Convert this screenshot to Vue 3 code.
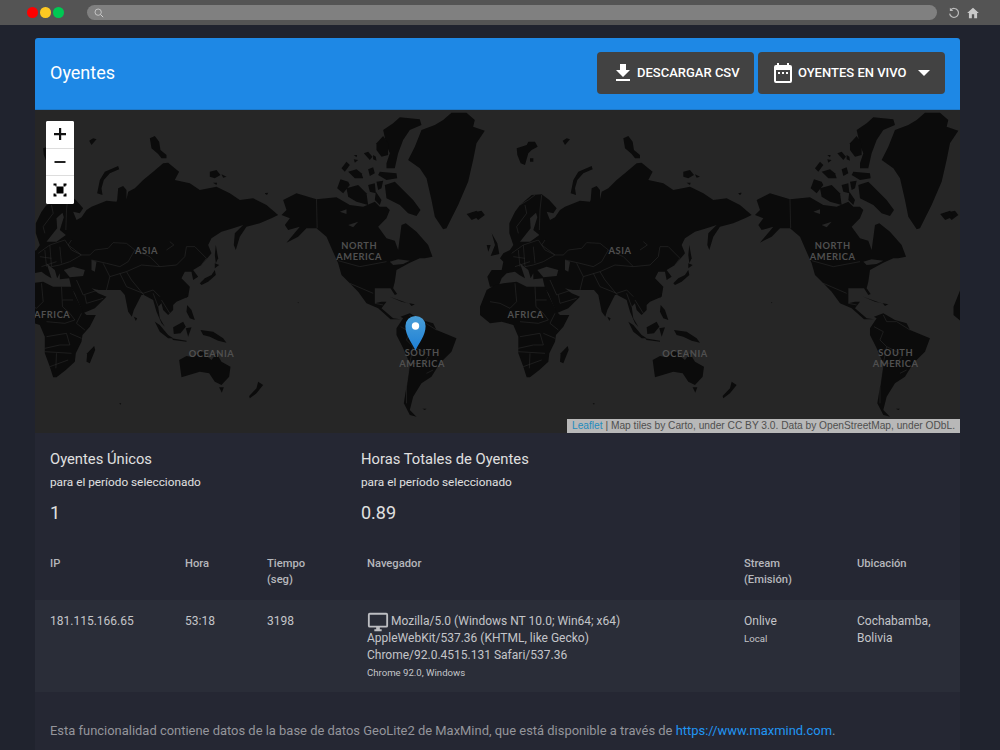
<script setup>
const tile = 473.5
const copies = [-tile, 0, tile]

// Each region is traced in a 3x crop whose top-left corner is (ox, oy) on the page.
const regions = [
  {
    ox: 500,
    oy: 130,
    land: [
      // Svalbard, Franz Josef, Novaya Zemlya and other arctic islands
      '50,55 80,45 85,35 105,35 113,50 95,60 85,70 75,105 62,100 52,75',
      '90,85 100,85 100,95 90,95',
      '188,32 200,25 210,28 195,45',
      '370,25 385,18 398,35 402,60 420,75 420,85 405,85 395,72 375,55',
      '275,108 278,118 250,130 232,150 225,175 228,195 212,190 220,150 235,125',
      '550,125 570,120 582,135 565,145 550,140',
      '585,133 600,140 590,143',
      '560,158 572,158 570,165',
      '715,190 722,188 720,195',
      // Eurasia
      '28,280 45,245 60,225 95,195 125,193 148,210 170,235 160,250 140,245 150,270 165,262 180,240 195,230 240,212 270,215 272,210 275,175 290,168 300,180 300,230 292,245 305,185 325,175 350,150 380,125 410,100 425,98 445,115 458,125 445,150 490,160 520,180 570,170 610,190 640,210 680,205 720,225 755,255 735,265 700,280 660,290 640,320 628,360 622,345 625,310 650,285 620,295 585,305 555,325 545,345 555,370 525,405 500,420 515,440 500,450 495,425 475,425 465,445 490,470 485,500 450,515 440,525 440,540 425,555 410,540 405,520 395,530 400,565 415,590 405,580 390,545 380,510 352,495 345,495 322,540 316,560 305,545 295,495 282,480 245,480 215,480 195,475 215,490 240,500 205,535 180,545 170,550 145,490 135,475 128,445 100,448 100,430 92,445 85,420 60,400 75,445 58,435 45,425 20,430 5,445 -5,470 -30,470 -38,440 -25,420 5,420 10,395 0,385 10,370 30,360 40,345 28,310',
      // Kamchatka tail and Sakhalin
      '568,345 575,385 568,400 565,375',
      '565,400 578,405 565,415',
      // British Isles and Iceland
      '-25,310 -8,340 -2,372 -28,378 -15,345',
      '-40,345 -28,345 -35,365',
      '-100,252 -70,242 -62,260 -85,270'
    ],
    seas: [
      '60,335 80,310 92,295 90,265 108,248 112,262 100,300 118,315 90,335',
      '112,420 140,410 175,420 170,438 130,442',
      '195,390 210,395 205,425 195,420'
    ],
    borders: [
      '35,370 70,345 115,330 135,360 165,375',
      '70,345 75,410 100,405 130,395 165,375',
      '40,380 75,385',
      '100,350 105,400',
      '55,360 60,410',
      '45,410 90,395',
      '135,330 125,345 165,375 190,375',
      '60,225 85,210 105,195',
      '55,310 50,290 80,250 75,225',
      '125,195 120,240 118,300',
      '190,375 205,360 245,355 260,338 300,340 325,360 370,380 400,410 450,405 475,380 480,350 505,350 540,385 525,405',
      '325,360 305,395 280,410 240,400 195,390',
      '230,400 250,440 300,425 315,450 352,495',
      '250,440 240,480',
      '300,425 345,405 400,410',
      '400,500 380,480 350,490',
      '430,335 442,345 420,360'
    ]
  },
  {
    ox: 500,
    oy: 270,
    land: [
      // Africa
      '-60,110 -40,60 -15,45 10,40 50,35 80,50 135,50 145,75 170,125 180,135 208,135 190,170 168,195 165,215 148,250 145,275 118,300 90,322 80,322 70,290 55,250 55,200 40,165 5,155 -30,160 -60,135',
      '203,228 206,240 190,280 180,275 182,250',
      // Australasia
      '458,270 480,258 500,262 525,240 545,262 555,270 570,250 585,275 612,290 608,320 585,345 565,335 548,310 520,305 465,322 462,300',
      '578,352 592,352 586,368',
      '695,335 710,345 690,370 670,385 668,378 690,355',
      '522,180 560,185 590,205 600,218 575,212 550,200 530,195',
      // South East Asia
      '440,172 470,155 478,170 462,190 442,192',
      '385,155 400,165 425,195 440,205 425,205 400,185',
      '435,205 480,212 480,215 440,210',
      '478,175 495,172 485,200',
      '482,105 495,120 505,150 490,145 480,125',
      '322,140 332,145 328,153',
      '478,75 485,72 480,85',
      '520,40 535,25 555,15 565,0 568,15 545,35 525,45',
      '278,400 284,400 282,404'
    ],
    seas: [],
    borders: [
      '45,40 50,95',
      '105,50 108,110',
      '140,90 108,90',
      '50,95 30,115 0,100 -30,95',
      '108,110 130,130 145,150 115,160 60,155',
      '60,200 120,190 130,225 100,225 55,235',
      '165,130 150,160 175,180',
      '130,190 165,205',
      '90,250 88,295',
      '55,245 135,250',
      '70,290 125,270',
      '150,30 170,75 215,60',
      '175,75 180,100 230,85',
      '280,10 300,50 350,70',
      '380,70 395,110',
      '405,90 430,130'
    ]
  },
  {
    ox: 720,
    oy: 110,
    land: [
      // Greenland and the Canadian arctic
      '590,30 615,8 660,8 685,30 680,50 715,62 690,100 680,150 665,215 635,285 600,355 590,358 565,320 555,270 540,205 520,175 485,150 505,110 525,60 565,45',
      '410,60 440,40 460,22 520,28 525,45 490,60 470,90 455,130 445,175 420,175 420,160 430,130 420,105',
      '390,100 410,78 425,100 425,135 405,140 390,120',
      '352,130 365,125 378,140 370,150',
      '322,135 332,135 330,142',
      '322,148 335,150 325,158',
      '285,175 300,155 310,165 295,185',
      '305,185 330,178 345,190 350,205 325,205',
      '365,178 380,172 385,190 370,198',
      '400,185 450,190 452,205 420,210 395,195',
      '380,135 388,140 390,152 380,148',
      '272,235 282,208 305,215 310,225 290,250',
      '300,235 335,225 360,250 365,285 330,275 305,260',
      '365,225 385,220 388,250 370,245',
      '390,215 410,212 405,235 395,240',
      '415,225 445,215 470,240 500,270 522,300 510,318 485,310 460,285 420,265',
      '388,245 405,270 400,285 385,270',
      '675,308 705,302 715,315 695,330',
      '55,250 65,248 62,254',
      // North America
      '110,270 150,250 210,268 270,262 310,285 350,290 385,275 400,290 420,290 430,300 420,325 395,350 420,385 445,392 455,420 465,345 478,340 510,365 545,405 558,440 535,445 520,445 490,458 450,480 445,515 440,535 452,552 445,555 432,535 385,535 385,580 405,575 420,575 405,595 440,625 462,628 432,628 395,595 360,580 335,545 310,520 285,495 275,460 255,415 240,380 210,355 180,355 155,380 120,398 160,350 125,360 115,345 130,325 105,315 120,300',
      // Caribbean
      '430,560 480,578 500,583 465,575',
      '488,580 505,583 495,588'
    ],
    seas: [
      '280,305 300,298 300,312',
      '305,345 335,335 320,352',
      '430,455 455,448 490,452 470,462 440,465'
    ],
    borders: [
      '210,268 212,355',
      '275,452 340,470 420,455',
      '310,520 380,550',
      '385,580 410,585'
    ]
  },
  {
    ox: 720,
    oy: 260,
    land: [
      '462,170 490,160 525,180 560,190 570,210 630,235 615,275 580,310 555,350 525,370 500,410 490,450 510,470 490,465 472,430 480,380 490,310 470,265 450,225 450,205 470,175',
      '528,446 540,446 535,450',
      '153,127 157,127 155,130'
    ],
    seas: [],
    borders: [
      '462,200 490,215 480,240 500,260 540,280',
      '490,165 500,185 530,185 570,210',
      '490,310 480,380 480,430',
      '540,340 560,330',
      '500,260 490,310 530,310 545,290'
    ]
  }
]

const labels = [
  { text: 'ASIA', x: 620, y: 254 },
  { text: 'NORTH', x: 832.7, y: 249 },
  { text: 'AMERICA', x: 832.7, y: 260 },
  { text: 'AFRICA', x: 525.7, y: 317.6 },
  { text: 'OCEANIA', x: 685, y: 357.3 },
  { text: 'SOUTH', x: 895.7, y: 355.6 },
  { text: 'AMERICA', x: 895.7, y: 366.6 }
]
const labelCopies = [-tile, 0]
</script>

<template>
  <div class="page">
    <header class="chrome">
      <div class="lights">
        <span class="light red"></span>
        <span class="light yellow"></span>
        <span class="light green"></span>
      </div>
      <div class="address">
        <svg class="search" viewBox="0 0 12 12" width="10" height="10">
          <circle cx="5" cy="5" r="3.8" fill="none" stroke="#d0d0d0" stroke-width="1" />
          <path d="M8 8l3 3" stroke="#d0d0d0" stroke-width="1.2" />
        </svg>
      </div>
      <svg class="reload" viewBox="0 0 14 14" width="12" height="12">
        <path d="M3.2 3.4A5.2 5.2 0 1 1 1.9 7.8" fill="none" stroke="#bdbdbd" stroke-width="1.4" />
        <path d="M2.2 0.8v4h4z" fill="#bdbdbd" />
      </svg>
      <svg class="home" viewBox="0 0 24 24" width="14" height="14">
        <path d="M10 21v-7h4v7h5v-9h3L12 3 2 12h3v9z" fill="#c8c8c8" />
      </svg>
    </header>

    <main class="card">
      <section class="card-head">
        <h1>Oyentes</h1>
        <div class="actions">
          <button class="btn" type="button">
            <svg viewBox="0 0 24 24" width="24" height="24">
              <path d="M19 9h-4V3H9v6H5l7 7zM5 18v2h14v-2z" fill="#fff" />
            </svg>
            <span>Descargar CSV</span>
          </button>
          <button class="btn live" type="button">
            <svg viewBox="0 0 24 24" width="24" height="24">
              <path d="M19 4h-1V2h-2v2H8V2H6v2H5a2 2 0 0 0-2 2v14a2 2 0 0 0 2 2h14a2 2 0 0 0 2-2V6a2 2 0 0 0-2-2zm0 16H5V9h14zM7 11h2v2H7zm4 0h2v2h-2zm4 0h2v2h-2z" fill="#fff" />
            </svg>
            <span>Oyentes en vivo</span>
            <i class="caret"></i>
          </button>
        </div>
      </section>

      <section class="map">
        <svg class="world" viewBox="35 110 925 323">
          <g v-for="dx in copies" :key="dx" :transform="`translate(${dx} 0)`">
            <g v-for="r in regions" :key="r.ox + '-' + r.oy" :transform="`translate(${r.ox} ${r.oy}) scale(0.3333)`">
              <polygon v-for="(p, i) in r.land" :key="'l' + i" :points="p" class="land" />
              <polygon v-for="(p, i) in r.seas" :key="'s' + i" :points="p" class="sea" />
              <polyline v-for="(b, i) in r.borders" :key="'b' + i" :points="b" class="border" />
            </g>
          </g>
          <g v-for="dx in labelCopies" :key="'t' + dx" :transform="`translate(${dx} 0)`">
            <text v-for="l in labels" :key="l.text + l.x" :x="l.x" :y="l.y" class="label">{{ l.text }}</text>
          </g>
        </svg>

        <div class="zoom">
          <button type="button">
            <svg viewBox="0 0 14 14" width="14" height="14"><path d="M6 1h2.2v5H13v2.2H8.2V13H6V8.2H1V6h5z" fill="#111" /></svg>
          </button>
          <button type="button">
            <svg viewBox="0 0 14 14" width="14" height="14"><path d="M1.5 6h11v2h-11z" fill="#222" /></svg>
          </button>
          <button type="button">
            <svg viewBox="0 0 14 14" width="14" height="14">
              <path d="M3.5 3.5h7v7h-7z" fill="#000" />
              <path d="M0.5 0.5h3v3h-1v-1h-2zM10.5 0.5h3v2h-1v1h-2zM0.5 10.5h2v1h1v2h-3zM11.5 10.5h2v3h-3v-2h1z" fill="#000" />
            </svg>
          </button>
        </div>

        <svg class="pin" viewBox="0 0 25 41" width="25" height="36">
          <defs>
            <linearGradient id="pinFill" x1="0" y1="0" x2="0" y2="1">
              <stop offset="0" stop-color="#4a9fd8" />
              <stop offset="1" stop-color="#1d7fd6" />
            </linearGradient>
          </defs>
          <path d="M12.5 40.5C9 32 1 24 1 12.5a11.5 11.5 0 0 1 23 0C24 24 16 32 12.5 40.5z" fill="url(#pinFill)" />
          <circle cx="12.5" cy="12.5" r="4.2" fill="#fff" />
        </svg>

        <div class="attribution">
          <a href="#">Leaflet</a> | Map tiles by Carto, under CC BY 3.0. Data by OpenStreetMap, under ODbL.
        </div>
      </section>

      <section class="stats">
        <div class="stat">
          <h2>Oyentes Únicos</h2>
          <p>para el período seleccionado</p>
          <strong>1</strong>
        </div>
        <div class="stat">
          <h2>Horas Totales de Oyentes</h2>
          <p>para el período seleccionado</p>
          <strong>0.89</strong>
        </div>
      </section>

      <table class="listeners">
        <colgroup>
          <col class="c-ip" />
          <col class="c-time" />
          <col class="c-secs" />
          <col class="c-browser" />
          <col class="c-stream" />
          <col />
        </colgroup>
        <thead>
          <tr>
            <th>IP</th>
            <th>Hora</th>
            <th>Tiempo<br />(seg)</th>
            <th>Navegador</th>
            <th>Stream<br />(Emisión)</th>
            <th>Ubicación</th>
          </tr>
        </thead>
        <tbody>
          <tr>
            <td>181.115.166.65</td>
            <td>53:18</td>
            <td>3198</td>
            <td class="browser">
              <svg class="monitor" viewBox="0 0 24 24" width="22" height="22">
                <path d="M21 2H3a2 2 0 0 0-2 2v12a2 2 0 0 0 2 2h7v2H8v2h8v-2h-2v-2h7a2 2 0 0 0 2-2V4a2 2 0 0 0-2-2zm0 14H3V4h18z" fill="#bdbec2" />
              </svg>
              Mozilla/5.0 (Windows NT 10.0; Win64; x64) AppleWebKit/537.36 (KHTML, like Gecko) Chrome/92.0.4515.131 Safari/537.36
              <small>Chrome 92.0, Windows</small>
            </td>
            <td>Onlive<small>Local</small></td>
            <td>Cochabamba, Bolivia</td>
          </tr>
        </tbody>
      </table>

      <p class="note">
        Esta funcionalidad contiene datos de la base de datos GeoLite2 de MaxMind, que está disponible a través de
        <a href="#">https://www.maxmind.com</a>.
      </p>
    </main>
  </div>
</template>

<style>
html,
body {
  margin: 0;
  background: #20232e;
}
</style>

<style scoped>
.page {
  height: 750px;
  overflow: hidden;
  background: #20232e;
  font-family: Roboto, "Liberation Sans", sans-serif;
}

.chrome {
  height: 25px;
  background: #545454;
  display: flex;
  align-items: center;
  padding-left: 27px;
}

.lights {
  display: flex;
  gap: 2.4px;
}

.light {
  width: 10.6px;
  height: 10.6px;
  border-radius: 50%;
}

.red { background: #fe0000; }
.yellow { background: #fdc822; }
.green { background: #00c853; }

.address {
  margin-left: 23.4px;
  width: 850px;
  height: 15px;
  border-radius: 8px;
  background: #808080;
  display: flex;
  align-items: center;
  padding-left: 7px;
  box-sizing: border-box;
}

.reload {
  margin-left: 11px;
}

.home {
  margin-left: 6px;
}

.card {
  margin: 13px 40px 0 35px;
  padding-bottom: 60px;
  background: #252733;
  border-radius: 3px 3px 0 0;
  overflow: hidden;
}

.card-head {
  box-sizing: border-box;
  height: 72px;
  background: #1e88e5;
  border-bottom: 1px solid #1c78c8;
  display: flex;
  align-items: center;
  justify-content: space-between;
  padding: 0 15px 1px;
}

h1 {
  margin: 0 0 2px;
  font-size: 18px;
  font-weight: 400;
  color: #fff;
}

.actions {
  display: flex;
  gap: 4px;
}

.btn {
  height: 42px;
  border: 0;
  border-radius: 4px;
  background: #424242;
  color: #fff;
  font: 500 13px Roboto, sans-serif;
  text-transform: uppercase;
  display: flex;
  align-items: center;
  gap: 2px;
  padding: 0 14px 1px;
  width: 157px;
}

.btn.live {
  width: 187px;
  padding: 0 13px 1px;
  gap: 3px;
}

.caret {
  width: 0;
  height: 0;
  border: 6px solid transparent;
  border-top: 6px solid #fff;
  border-bottom: 0;
  margin-left: 8px;
}

.map {
  position: relative;
  height: 323px;
  background: #262626;
  overflow: hidden;
}

.world {
  display: block;
  width: 100%;
  height: 100%;
}

.land {
  fill: #0b0b0b;
}

.sea {
  fill: #262626;
}

.border {
  fill: none;
  stroke: #2e2e2e;
  stroke-width: 1.6;
}

.label {
  fill: #505050;
  font-family: Lato, sans-serif;
  font-weight: 700;
  font-size: 9.3px;
  letter-spacing: 0.55px;
  text-anchor: middle;
}

.zoom {
  position: absolute;
  left: 11px;
  top: 11px;
  width: 28px;
  background: #fff;
  border-radius: 2px;
  overflow: hidden;
}

.zoom button {
  display: flex;
  align-items: center;
  justify-content: center;
  width: 28px;
  height: 27.7px;
  padding: 0;
  background: #fff;
  border: 0;
  border-bottom: 1px solid #ddd;
}

.zoom button:last-child {
  border-bottom: 0;
}

.pin {
  position: absolute;
  left: 368px;
  top: 205px;
}

.attribution {
  position: absolute;
  right: 0;
  bottom: 0;
  height: 14px;
  padding: 0 5px;
  background: #b8b8b8;
  color: #4f4f4f;
  font: 10.2px/14px "Liberation Sans", sans-serif;
  white-space: nowrap;
}

.attribution a {
  color: #1f8bbd;
  text-decoration: none;
}

.stats {
  display: flex;
  padding: 17.4px 15px 0;
}

.stat {
  width: 311px;
  color: #e0e0e0;
}

.stat h2 {
  margin: 0;
  font-size: 14.75px;
  line-height: 18px;
  font-weight: 400;
}

.stat p {
  margin: 5.6px 0 0;
  font-size: 11.8px;
  line-height: 16px;
}

.stat strong {
  display: block;
  margin-top: 12px;
  font-size: 18px;
  line-height: 22px;
  font-weight: 400;
}

.listeners {
  width: 100%;
  margin-top: 32px;
  border-collapse: collapse;
  table-layout: fixed;
  font-size: 12px;
  color: #c4c5c9;
}

.c-ip { width: 150px; }
.c-time { width: 82px; }
.c-secs { width: 100px; }
.c-browser { width: 377px; }
.c-stream { width: 113px; }

th {
  padding: 0 0 12px;
  font-size: 11.2px;
  font-weight: 500;
  text-align: left;
  vertical-align: top;
  line-height: 16px;
  color: #b6b7bc;
}

th:first-child,
td:first-child {
  padding-left: 15px;
}

td {
  padding: 13px 8px 12px 0;
  vertical-align: top;
  line-height: 17px;
  background: #2a2d38;
}

td.browser {
  padding-right: 60px;
}

td small {
  display: block;
  margin-top: 2px;
  font-size: 9.6px;
  line-height: 14px;
}

.monitor {
  vertical-align: -2px;
  margin: -6px -1px -6px 0;
}

.note {
  margin: 30px 0 0;
  padding: 0 15px;
  font-size: 12.95px;
  line-height: 18px;
  color: #94959b;
}

.note a {
  color: #2196f3;
  text-decoration: none;
}
</style>
